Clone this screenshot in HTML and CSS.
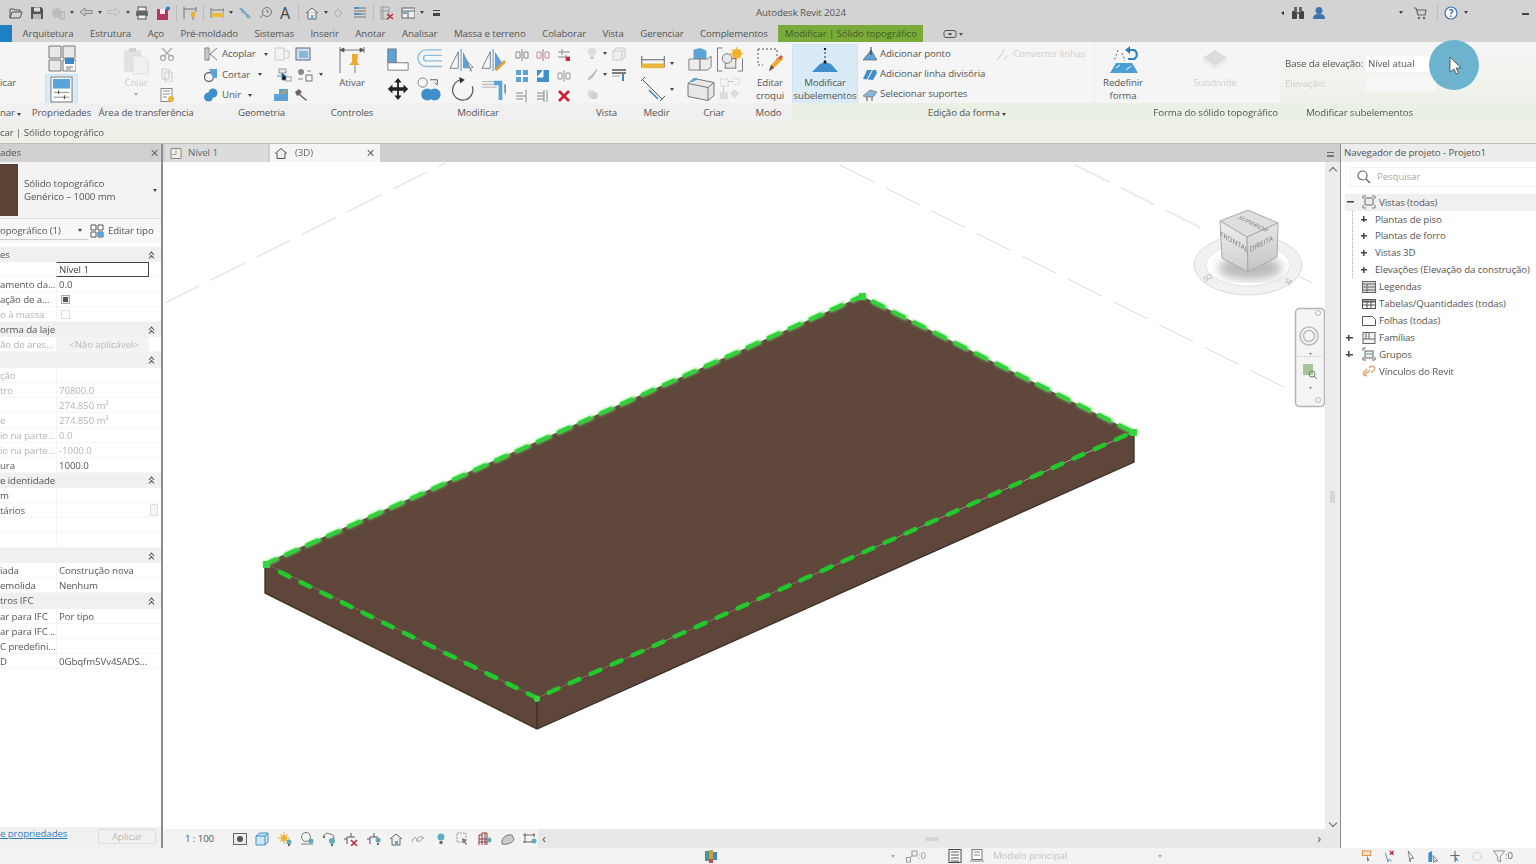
FILE: index.html
```html
<!DOCTYPE html>
<html lang="pt">
<head>
<meta charset="utf-8">
<title>Autodesk Revit 2024</title>
<link rel="stylesheet" href="styles.css">
</head>
<body>
<svg class="defs" aria-hidden="true"><symbol id="chev" viewBox="0 0 7 8"><path d="M1 4l2.500-3L6 4M1 7.500l2.500-3L6 7.500" fill="none" stroke="#555" stroke-width="1.100"/></symbol></svg>
<div class="app">

<header class="titlebar">
  <div class="qat">
    <svg class="ic14" viewBox="0 0 14 14"><path d="M1 12V3h4l1 1h5v2M1 12l2-6h10l-2 6z" fill="none" stroke="#555"/></svg>
    <svg class="ic14" viewBox="0 0 14 14"><path d="M1 1h10l2 2v10H1z" fill="#555"/><rect x="4" y="1.500" width="6" height="4" fill="#ddd"/><rect x="3" y="8" width="8" height="5" fill="#bbb"/></svg>
    <svg class="ic14" viewBox="0 0 14 14"><circle cx="6" cy="7" r="5" fill="#bdbdbd"/><path d="M9 6h5v7H9z" fill="#ccc" stroke="#aaa"/></svg>
    <i class="dd"></i>
    <svg class="ic14" viewBox="0 0 14 14"><path d="M1 6l5-4v2.500h7v3H6V10z" fill="#c9c9c9" stroke="#888"/></svg>
    <i class="dd"></i>
    <svg class="ic14" viewBox="0 0 14 14"><path d="M13 6L8 2v2.500H1v3h7V10z" fill="#d4d4d4" stroke="#bbb"/></svg>
    <i class="dd"></i>
    <svg class="ic14" viewBox="0 0 14 14"><rect x="3" y="1" width="8" height="4" fill="#eee" stroke="#555"/><rect x="1" y="5" width="12" height="5" rx="1" fill="#666"/><rect x="3" y="9" width="8" height="4" fill="#eee" stroke="#555"/></svg>
    <svg class="ic14" viewBox="0 0 14 14"><rect x="1" y="3" width="11" height="11" fill="#b5395a"/><rect x="4" y="3" width="5" height="5" fill="#eee"/><circle cx="12" cy="2.500" r="2" fill="#2c7fc0"/></svg>
    <span class="vsep"></span>
    <svg class="ic14" viewBox="0 0 14 14"><path d="M1 1v12M13 1v5M1 3h12" fill="none" stroke="#777"/><rect x="8" y="6" width="4" height="5" fill="#f0b030"/><path d="M10 11v3" stroke="#777"/></svg>
    <span class="vsep"></span>
    <svg class="ic14" viewBox="0 0 14 14"><path d="M1 2v10M14 2v10" stroke="#777"/><rect x="1" y="7" width="13" height="4" fill="#e8b93c"/><path d="M1 4h13" stroke="#777"/></svg>
    <i class="dd"></i>
    <svg class="ic14" viewBox="0 0 14 14"><path d="M2 2l10 10" stroke="#6aa9d4" stroke-width="2"/><path d="M3 7l3-3M8 12l3-3" stroke="#888"/></svg>
    <svg class="ic14" viewBox="0 0 14 14"><circle cx="8" cy="6" r="4.500" fill="none" stroke="#777"/><path d="M8 3.500V6h2M1 12l3-3" stroke="#777" fill="none"/></svg>
    <span class="qat-a">A</span>
    <span class="vsep"></span>
    <svg class="ic14" viewBox="0 0 14 14"><path d="M1 7l6-5 6 5M3 6v7h8V6" fill="#eee" stroke="#666"/><rect x="6" y="9" width="2.500" height="4" fill="#6aa9d4"/></svg>
    <i class="dd"></i>
    <svg class="ic10" viewBox="0 0 10 10"><path d="M5 1l4 4-4 4-4-4z" fill="none" stroke="#aaa"/></svg>
    <svg class="ic14 qat-lines" viewBox="0 0 14 14"><path d="M1 2h12M1 5h12M1 8h12M1 11h12" stroke="#777"/><path d="M1 2h5M1 8h7" stroke="#3f87c2" stroke-width="1.500"/></svg>
    <span class="vsep"></span>
    <svg class="ic14" viewBox="0 0 14 14"><path d="M1 1h8v12H1zM3 1v12M1 5h8" fill="none" stroke="#999"/><path d="M7 8l6 5M13 8l-6 5" stroke="#c0283c" stroke-width="1.500"/></svg>
    <svg class="ic14" viewBox="0 0 14 14"><rect x="1" y="2" width="13" height="10" fill="#eee" stroke="#666"/><path d="M1 5h13M7 5v7" stroke="#666"/><rect x="2" y="6" width="4" height="2" fill="#6aa9d4"/></svg>
    <i class="dd"></i>
    <span class="qat-menu"></span>
  </div>
  <div class="app-title">Autodesk Revit 2024</div>
  <div class="tray">
    <i class="dd dd-left"></i>
    <svg class="ic14" viewBox="0 0 14 14"><rect x="1" y="5" width="5" height="8" rx="1" fill="#444"/><rect x="8" y="5" width="5" height="8" rx="1" fill="#444"/><rect x="3" y="1" width="3" height="5" fill="#666"/><rect x="8" y="1" width="3" height="5" fill="#666"/><rect x="5" y="6" width="4" height="2" fill="#666"/></svg>
    <svg class="ic14" viewBox="0 0 14 14"><circle cx="7" cy="4.500" r="3.500" fill="#3e74ae"/><path d="M1 13c0-4 2-5 6-5s6 1 6 5z" fill="#3e74ae"/></svg>
    <i class="dd ml-cart-dd"></i>
    <svg class="ic14 ml-cart" viewBox="0 0 14 14"><path d="M1 2h2l2 7h7l1-5H4" fill="none" stroke="#666" stroke-width="1.200"/><circle cx="6" cy="12" r="1.200" fill="#666"/><circle cx="11" cy="12" r="1.200" fill="#666"/></svg>
    <span class="vsep ml-sep"></span>
    <svg class="ic14 ml-help" viewBox="0 0 14 14"><circle cx="7" cy="7" r="6" fill="#fff" stroke="#3e74ae" stroke-width="1.200"/><text x="7" y="10.500" text-anchor="middle" class="help-q">?</text></svg>
    <i class="dd"></i>
    <span class="minimize"></span>
  </div>
</header>

<nav class="tabs">
  <span class="tab-file"></span>
  <span>Arquitetura</span><span>Estrutura</span><span>Aço</span><span>Pré-moldado</span><span>Sistemas</span><span>Inserir</span><span>Anotar</span><span>Analisar</span><span>Massa e terreno</span><span>Colaborar</span><span>Vista</span><span>Gerenciar</span><span>Complementos</span>
  <span class="tab-context">Modificar | Sólido topográfico</span>
  <svg class="tab-extra" viewBox="0 0 20 10"><rect x="1" y="1.500" width="12" height="7" rx="2" fill="none" stroke="#555"/><rect x="5.500" y="4" width="3" height="2" fill="#555"/><path d="M16 4h4l-2 3z" fill="#555"/></svg>
</nav>

<section class="ribbon">
  <div class="panel p-select">
    <div class="pbody stack-start"><span class="big-label">icar</span></div>
    <div class="plabel left">nar <i class="dd"></i></div>
  </div>

  <div class="panel p-props">
    <div class="pbody center-col">
      <svg class="ic-prop-top" viewBox="0 0 28 27"><path d="M1 1h12v12H1zM15 1h12v12H15zM1 15h12v11H1z" fill="#e8e8e8" stroke="#777"/><rect x="15" y="15" width="13" height="11" fill="#fff" stroke="#777"/><rect x="17" y="13" width="9" height="6" fill="#3f87c2"/><path d="M18 22h7M18 24h5" stroke="#777"/></svg>
      <span class="selected-btn"><svg class="ic-prop" viewBox="0 0 24 28"><rect x="1" y="1" width="22" height="26" fill="#fff" stroke="#777"/><rect x="3" y="3" width="18" height="10" fill="#5ba3d8"/><path d="M4 17h16M4 22h16" stroke="#888"/><path d="M9 15v4M15 20v4" stroke="#333"/></svg></span>
    </div>
    <div class="plabel">Propriedades</div>
  </div>

  <div class="panel p-clip">
    <div class="pbody clip-grid">
      <div class="paste">
        <svg class="ic-paste" viewBox="0 0 26 28"><rect x="1" y="3" width="17" height="22" rx="1" fill="#e2e2e2"/><rect x="6" y="1" width="7" height="4" fill="#d2d2d2"/><path d="M10 9h10l5 5v13H10z" fill="#f0f0f0" stroke="#ddd"/></svg>
        <span class="faint">Colar</span>
        <i class="dd faint-dd"></i>
      </div>
      <div class="small-col">
        <svg class="ic16" viewBox="0 0 16 14"><circle cx="4" cy="11" r="2.500" fill="none" stroke="#aaa" stroke-width="1.300"/><circle cx="12" cy="11" r="2.500" fill="none" stroke="#aaa" stroke-width="1.300"/><path d="M5 9l8-8M11 9L3 1" stroke="#aaa" stroke-width="1.300"/></svg>
        <svg class="ic16" viewBox="0 0 16 14"><path d="M3 1h7v10H3zM6 4h7v10H6z" fill="#f2f2f2" stroke="#ccc"/></svg>
        <svg class="ic16" viewBox="0 0 16 14"><rect x="2" y="0.500" width="11" height="13" fill="#fff" stroke="#888"/><path d="M4 3h7M4 6h7M4 9h4" stroke="#888"/><circle cx="12" cy="11" r="3" fill="#e8b93c"/></svg>
      </div>
    </div>
    <div class="plabel">Área de transferência</div>
  </div>

  <div class="panel p-geo">
    <div class="pbody geo-grid">
      <div class="geo-row">
        <svg class="ic14" viewBox="0 0 14 14"><path d="M1 1h4v12H1zM13 1L6 7l7 6" fill="none" stroke="#777"/><path d="M3 1v12" stroke="#999"/></svg>
        <span class="cmd w35">Acoplar</span><i class="dd"></i>
        <svg class="ic16 sec1" viewBox="0 0 16 14"><path d="M1 1h9v12H1zM10 4h5v7h-5" fill="#f3f3f3" stroke="#ccc"/></svg>
        <svg class="ic16 sec2" viewBox="0 0 16 14"><rect x="1" y="1" width="14" height="12" fill="#cfe0ee" stroke="#668"/><rect x="4" y="4" width="9" height="7" fill="#8ab6d8"/></svg>
      </div>
      <div class="geo-row">
        <svg class="ic14" viewBox="0 0 14 14"><circle cx="5" cy="9" r="4.500" fill="none" stroke="#666" stroke-width="1.300"/><path d="M5 1h8v9H9" fill="#5ba3d8"/></svg>
        <span class="cmd w29">Cortar</span><i class="dd"></i>
        <svg class="ic16 sec3" viewBox="0 0 16 14"><rect x="3" y="1" width="7" height="4" fill="#e8e8e8" stroke="#999"/><path d="M6 5v7h8M1 8h10" stroke="#4a8fc5"/><rect x="10" y="9" width="5" height="4" fill="#fff" stroke="#999"/></svg>
        <svg class="ic16 sec4" viewBox="0 0 16 14"><circle cx="4" cy="4" r="3" fill="#888"/><rect x="9" y="7" width="6" height="6" fill="none" stroke="#777"/><path d="M1 11h5M10 3h4" stroke="#888"/></svg>
        <i class="dd"></i>
      </div>
      <div class="geo-row">
        <svg class="ic14" viewBox="0 0 14 14"><circle cx="4.500" cy="9" r="4.500" fill="#3f8fcb"/><circle cx="9" cy="5" r="4.500" fill="#3f8fcb"/></svg>
        <span class="cmd w19">Unir</span><i class="dd"></i>
        <svg class="ic16 sec5" viewBox="0 0 16 14"><path d="M1 13V6h5V1h9v12z" fill="#5ba3d8"/><path d="M8 6l5-4" stroke="#d93" stroke-width="2"/></svg>
        <svg class="ic14 sec6" viewBox="0 0 14 14"><path d="M1 4l4-3 3 3-2 2 7 6-1 1-7-6-2 1z" fill="#666"/></svg>
      </div>
    </div>
    <div class="plabel">Geometria</div>
  </div>

  <div class="panel p-ctl">
    <div class="pbody center-col">
      <svg class="ic-pin" viewBox="0 0 28 28"><path d="M2 1v26M26 1v6M2 4h24M2 4l4-2v4zM26 4l-4-2v4z" fill="#555" stroke="#555" stroke-width=".8"/><path d="M14 8h6l-1 8 3 3H11l3-3z" fill="#f0a92e"/><path d="M17 19v8" stroke="#888"/></svg>
      <span class="big-label">Ativar</span>
    </div>
    <div class="plabel">Controles</div>
  </div>

  <div class="panel p-mod">
    <div class="pbody mod-grid">
      <div class="mod-big">
        <svg class="ic26" viewBox="0 0 26 26"><rect x="2" y="1" width="9" height="15" fill="#5ba3d8" stroke="#777"/><path d="M2 16h22v8H2z" fill="#fff" stroke="#777"/></svg>
        <svg class="ic26" viewBox="0 0 28 26"><path d="M27 2H10a8 8 0 0 0 0 18h17M27 8H10a3 3 0 0 0 0 6h17" fill="none" stroke="#8fbcdc" stroke-width="1.500"/></svg>
        <svg class="ic26" viewBox="0 0 28 26"><path d="M1 22L10 4v18z" fill="none" stroke="#777"/><path d="M13 1v24" stroke="#4a8fc5"/><path d="M15 4l9 18h-9z" fill="#5ba3d8"/><path d="M19 14l7 7-3 1 1 3z" fill="#fff" stroke="#777"/></svg>
        <svg class="ic26" viewBox="0 0 28 26"><path d="M1 22L10 4v18z" fill="none" stroke="#777"/><path d="M13 1v24" stroke="#4a8fc5"/><path d="M15 4l9 14-9 6z" fill="#5ba3d8"/><path d="M16 24l10-10" stroke="#e8a030" stroke-width="3"/></svg>
        <svg class="ic26" viewBox="0 0 26 26"><path d="M13 1l4 5h-3v5h5V8l5 5-5 5v-3h-5v5h3l-4 5-4-5h3v-5H7v3l-5-5 5-5v3h5V6H9z" fill="#222"/></svg>
        <svg class="ic26" viewBox="0 0 28 26"><circle cx="6" cy="6" r="5" fill="none" stroke="#777"/><path d="M14 3h8v5M19 6l3 3" fill="none" stroke="#555"/><circle cx="11" cy="19" r="6.500" fill="#3f8fcb"/><circle cx="19" cy="19" r="6.500" fill="#3f8fcb"/></svg>
        <svg class="ic26" viewBox="0 0 28 26"><path d="M15 3a11 11 0 1 0 10 7" fill="none" stroke="#555" stroke-width="1.300"/><path d="M11 0l6 3-5 4z" fill="#333"/></svg>
        <svg class="ic26" viewBox="0 0 28 26"><path d="M1 5h16M1 8h16M1 11h16" stroke="#aaa"/><path d="M14 4h9v21h-4V9h-5z" fill="#5ba3d8"/><path d="M26 8v10" stroke="#333"/></svg>
      </div>
      <div class="mod-small">
        <svg class="ic14" viewBox="0 0 14 14"><path d="M1 4h4v6H1zM9 4h4v6H9zM7 1v12" fill="none" stroke="#888"/></svg>
        <svg class="ic14" viewBox="0 0 14 14"><path d="M1 4h4v6H1zM9 4h4v6H9z" fill="none" stroke="#c88"/><path d="M7 1v12" stroke="#888"/></svg>
        <svg class="ic14" viewBox="0 0 14 14"><path d="M1 4h12M1 9h12M5 1v6M9 7v6" stroke="#888"/><rect x="9" y="9" width="4" height="4" fill="#c0283c"/></svg>
        <svg class="ic14" viewBox="0 0 14 14"><path d="M1 1h5v5H1zM8 1h5v5H8zM1 8h5v5H1zM8 8h5v5H8z" fill="#5ba3d8"/></svg>
        <svg class="ic14" viewBox="0 0 14 14"><path d="M1 1h12v12H1z" fill="#3f8fcb"/><path d="M7 1v7H1" fill="#fff" stroke="#fff"/></svg>
        <svg class="ic14" viewBox="0 0 14 14"><path d="M1 4h4v6H1zM9 4h4v6H9zM7 1v12" fill="none" stroke="#999"/></svg>
        <svg class="ic14" viewBox="0 0 14 14"><path d="M1 4h7M1 7h7M1 10h7M11 1v12M8 7h3" stroke="#888"/></svg>
        <svg class="ic14" viewBox="0 0 14 14"><path d="M1 4h7M1 7h7M1 10h7M11 1v12M8 1v12" stroke="#888"/></svg>
        <svg class="ic14" viewBox="0 0 14 14"><path d="M2 2l10 10M12 2L2 12" stroke="#d02030" stroke-width="2.600"/></svg>
      </div>
    </div>
    <div class="plabel">Modificar</div>
  </div>

  <div class="panel p-vista">
    <div class="pbody vista-grid">
      <svg class="ic12" viewBox="0 0 12 14"><circle cx="6" cy="5" r="4.500" fill="#ddd"/><rect x="4" y="10" width="4" height="3" fill="#ccc"/></svg><i class="dd"></i>
      <svg class="ic14" viewBox="0 0 14 14"><path d="M1 4h9v9H1zM1 4l3-3h9v9l-3 3M10 4l3-3" fill="#eee" stroke="#ccc"/></svg>
      <svg class="ic12" viewBox="0 0 12 14"><path d="M1 13l3-5 3 2-4 3zM5 8l6-7 1 1-5 8" fill="#bbb"/></svg><i class="dd"></i>
      <svg class="ic14" viewBox="0 0 14 14"><path d="M0 2h14M0 5h14" stroke="#555" stroke-width="1.400"/><path d="M0 8h8" stroke="#aaa"/><path d="M11 6v7" stroke="#3f87c2" stroke-width="2"/></svg>
      <svg class="ic12" viewBox="0 0 12 14"><circle cx="5" cy="6" r="4" fill="#ddd"/><circle cx="8" cy="8" r="4" fill="#cfcfcf"/></svg>
    </div>
    <div class="plabel">Vista</div>
  </div>

  <div class="panel p-medir">
    <div class="pbody medir-grid">
      <svg class="ic-dim" viewBox="0 0 26 16"><path d="M1 0v12M25 0v12M1 4h24" stroke="#555"/><rect x="1" y="8" width="24" height="5" fill="#e8b93c"/></svg><i class="dd"></i>
      <svg class="ic-mea" viewBox="0 0 26 26"><path d="M2 3l20 20" stroke="#555"/><path d="M5 1L1 5M25 20l-5 5" stroke="#555"/><path d="M9 14l9 9" stroke="#3f87c2" stroke-width="1.500"/></svg><i class="dd"></i>
    </div>
    <div class="plabel">Medir</div>
  </div>

  <div class="panel p-criar">
    <div class="pbody criar-grid">
      <svg class="ic26" viewBox="0 0 26 26"><path d="M6 3l7-2 7 3v10H6z" fill="#5ba3d8"/><path d="M1 13h12v12H1z" fill="#ededed" stroke="#777"/><path d="M13 13h8l4-3v12l-4 3h-8z" fill="#ededed" stroke="#777"/></svg>
      <svg class="ic28" viewBox="0 0 28 26"><path d="M6 1H1v24h5M22 25h5V12" fill="none" stroke="#777"/><circle cx="21" cy="7" r="5" fill="#f0b030"/><path d="M21 0v14M14 7h14M16 2l10 10M26 2L16 12" stroke="#f0b030"/><rect x="9" y="12" width="11" height="10" fill="#e8e8e8" stroke="#777"/><circle cx="11" cy="12" r="5" fill="#e8e8e8" stroke="#777"/></svg>
      <svg class="ic28" viewBox="0 0 28 24"><path d="M1 6l6-5 20 4v13l-6 5-20-4z" fill="#e8e8e8" stroke="#777"/><path d="M1 6l20 4v13M21 10l6-5" fill="none" stroke="#777"/><path d="M4 4l6-3" stroke="#5ba3d8" stroke-width="2"/></svg>
      <svg class="ic26" viewBox="0 0 26 26"><path d="M4 2h8v8H4zM18 2h6v6h-6" fill="none" stroke="#ccc" stroke-dasharray="2 1"/><path d="M12 5h6M7 10v6" stroke="#bbb"/><rect x="3" y="16" width="9" height="8" fill="#ddd"/><path d="M19 13l5 5-5 5-5-5z" fill="#ddd"/></svg>
    </div>
    <div class="plabel">Criar</div>
  </div>

  <div class="panel p-modo">
    <div class="pbody center-col">
      <svg class="ic-edit" viewBox="0 0 26 26"><path d="M1 2h19v11M1 2v16h5" fill="none" stroke="#555" stroke-dasharray="2 2"/><path d="M12 24l2-6 9-9 3 3-9 9z" fill="#f0a92e"/><path d="M21 11l3-3 2 2-3 3z" fill="#d65a3a"/><path d="M12 24l2-6 3 3z" fill="#555"/></svg>
      <span class="big-label two">Editar<br>croqui</span>
    </div>
    <div class="plabel">Modo</div>
  </div>

  <div class="panel p-sub">
    <div class="pbody shape-row">
      <div class="sub-btn">
        <svg class="ic-sub" viewBox="0 0 26 25"><path d="M13 0v14" stroke="#222" stroke-dasharray="2 2"/><path d="M0 24l8-8 5-2 6 2 7 8z" fill="#3f8fcb"/><circle cx="13" cy="14" r="1.500" fill="#111"/><circle cx="13" cy="1" r="1.200" fill="#111"/></svg>
        <span class="big-label two">Modificar<br>subelementos</span>
      </div>
      <div class="shape-list">
        <div class="cmd-row"><svg class="ic14" viewBox="0 0 14 14"><path d="M0 13l4-5 4-5 6 10z" fill="#5ba3d8" stroke="#666" stroke-width=".7"/><path d="M8 0v8" stroke="#333"/></svg><span class="cmd">Adicionar ponto</span></div>
        <div class="cmd-row"><svg class="ic14" viewBox="0 0 14 14"><path d="M0 12l4-9h9l1 3-4 7z" fill="#3f8fcb"/><path d="M4 13l6-11" stroke="#fff"/></svg><span class="cmd">Adicionar linha divisória</span></div>
        <div class="cmd-row"><svg class="ic14" viewBox="0 0 14 14"><path d="M0 9l7-6 7 2-4 5H3z" fill="#8ab6d8" stroke="#666" stroke-width=".6"/><path d="M4 10v4M9 10v4" stroke="#555"/></svg><span class="cmd">Selecionar suportes</span></div>
      </div>
      <div class="convert">
        <svg class="ic14" viewBox="0 0 14 14"><path d="M1 13l5-6M6 7l2-5M8 13l4-5" stroke="#ddd" stroke-width="1.500"/></svg>
        <span class="faint">Converter linhas</span>
      </div>
    </div>
    <div class="plabel green-label">Edição da forma <i class="dd"></i></div>
  </div>

  <div class="panel p-form">
    <div class="pbody form-row">
      <div class="redef">
        <svg class="ic-red" viewBox="0 0 28 28"><path d="M0 27l6-10h16l6 10z" fill="#4a9fd6"/><path d="M6 22l4-3M16 24l5-4" stroke="#fff"/><path d="M8 4l-4 11M12 7l3 8" stroke="#666" stroke-dasharray="2 2"/><path d="M16 4h8a5 5 0 0 1 0 9h-6" fill="none" stroke="#2c7fc0" stroke-width="2"/><path d="M20 0l-5 4 5 4z" fill="#2c7fc0"/></svg>
        <span class="big-label two">Redefinir<br>forma</span>
      </div>
      <div class="subd">
        <svg class="ic-sd" viewBox="0 0 26 22"><path d="M1 9l12-8 12 8-12 8z" fill="#dcdcdc"/><path d="M1 9v4l12 8 12-8V9l-12 8z" fill="#ececec"/></svg>
        <span class="faint">Subdivide</span>
      </div>
    </div>
    <div class="plabel green-label">Forma do sólido topográfico</div>
  </div>

  <div class="panel p-base">
    <div class="pbody base-grid">
      <span class="cmd">Base da elevação:</span><span class="field">Nível atual<i class="dd faint-dd"></i></span>
      <span class="faint">Elevação:</span><span class="field blank"></span>
    </div>
    <div class="plabel green-label">Modificar subelementos</div>
  </div>
</section>

<div class="optionsbar">car | Sólido topográfico</div>

<main class="workspace">
  <aside class="props">
    <div class="pane-title">ades<span class="close">✕</span></div>
    <div class="type-box">
      <span class="swatch"></span>
      <div class="type-text">Sólido topográfico<br>Genérico – 1000 mm</div>
      <i class="dd"></i>
    </div>
    <div class="type-line">
      <span class="type-filter">opográfico (1)<i class="dd"></i></span>
      <svg class="ic14" viewBox="0 0 14 14"><path d="M1 1h5v5H1zM8 1h5v5H8zM1 8h5v5H1zM8 8h5v5H8z" fill="#fff" stroke="#555"/><rect x="8" y="8" width="5" height="5" fill="#5ba3d8"/></svg>
      <span>Editar tipo</span>
    </div>
    <div class="ptable">
      <div class="psec">es<svg class="chev"><use href="#chev"/></svg></div>
      <div class="prow"><span></span><span class="level-input">Nível 1</span></div>
      <div class="prow"><span>amento da...</span><span>0.0</span></div>
      <div class="prow"><span>ação de a...</span><span><i class="check on"></i></span></div>
      <div class="prow off"><span>o à massa</span><span><i class="check"></i></span></div>
      <div class="psec">orma da laje<svg class="chev"><use href="#chev"/></svg></div>
      <div class="prow off"><span>ão de ares...</span><span class="na">&lt;Não aplicável&gt;</span></div>
      <div class="psec"><span></span><svg class="chev"><use href="#chev"/></svg></div>
      <div class="prow off"><span>ção</span><span></span></div>
      <div class="prow off"><span>tro</span><span>70800.0</span></div>
      <div class="prow off"><span></span><span>274.850 m²</span></div>
      <div class="prow off"><span>e</span><span>274.850 m²</span></div>
      <div class="prow off"><span>io na parte...</span><span>0.0</span></div>
      <div class="prow off"><span>io na parte...</span><span>-1000.0</span></div>
      <div class="prow"><span>ura</span><span>1000.0</span></div>
      <div class="psec">e identidade<svg class="chev"><use href="#chev"/></svg></div>
      <div class="prow"><span>m</span><span></span></div>
      <div class="prow"><span>tários</span><span class="edit-cell"><i class="mini-btn"></i></span></div>
      <div class="prow"><span></span><span></span></div>
      <div class="prow"><span></span><span></span></div>
      <div class="psec"><span></span><svg class="chev"><use href="#chev"/></svg></div>
      <div class="prow"><span>iada</span><span>Construção nova</span></div>
      <div class="prow"><span>emolida</span><span>Nenhum</span></div>
      <div class="psec">tros IFC<svg class="chev"><use href="#chev"/></svg></div>
      <div class="prow"><span>ar para IFC</span><span>Por tipo</span></div>
      <div class="prow"><span>ar para IFC ...</span><span></span></div>
      <div class="prow"><span>C predefini...</span><span></span></div>
      <div class="prow"><span>D</span><span>0Gbqfm5Vv4SADS...</span></div>
    </div>
    <div class="props-foot"><a class="help-link">e propriedades</a><span class="apply">Aplicar</span></div>
  </aside>

  <div class="center">
    <div class="doc-tabs">
      <span class="doc-tab"><svg class="ic12" viewBox="0 0 12 12"><path d="M1 1h10v10H1z" fill="#eee" stroke="#888"/><path d="M1 7h5V1" fill="none" stroke="#c96"/></svg>Nível 1</span>
      <span class="doc-tab active"><svg class="ic12" viewBox="0 0 12 12"><path d="M0 6l6-5 6 5M2 5v6h8V5" fill="#eee" stroke="#555"/></svg>(3D)<span class="close">✕</span></span>
      <span class="tabs-menu"></span>
    </div>
    <div class="view-row">
      <div class="viewport">
        <svg class="canvas" viewBox="163 162 1162 667" role="img" aria-label="Vista 3D de um sólido topográfico">
          <defs>
            <linearGradient id="cl" x1="0" y1="0" x2="0" y2="1"><stop offset="0" stop-color="#eeeeee"/><stop offset="1" stop-color="#cfcfcf"/></linearGradient>
            <linearGradient id="cr" x1="0" y1="0" x2="0" y2="1"><stop offset="0" stop-color="#e6e6e6"/><stop offset="1" stop-color="#c4c4c4"/></linearGradient>
            <filter id="sh"><feGaussianBlur stdDeviation="5"/></filter>
            <filter id="gl"><feGaussianBlur stdDeviation="1.200"/></filter>
          </defs>
          <g class="ref-lines">
            <path d="M165 303L445 163"/>
            <path d="M840 165L1290 390"/>
            <path d="M1075 165L1205 230M1290 272L1312 283"/>
          </g>
          <polygon class="side" points="265,563 537,698 537,729 265,593"/>
          <polygon class="side" points="537,698 1134,432 1134,462 537,729"/>
          <polygon class="top" points="862,296 1133,432 537,698 265,563"/>
          <path class="edge" d="M265 563V593L537 729L1134 462V432M537 698V729"/>
          <path class="glow" filter="url(#gl)" d="M265 564L862 296L1133 432"/>
          <path class="dash-far" d="M265 564L862 296L1133 432"/>
          <path class="dash-near" d="M280 572L537 698L1133 432"/>
          <g class="grips">
            <rect x="263" y="561" width="7" height="7"/>
            <rect x="859" y="293" width="7" height="7"/>
            <rect x="1130" y="429" width="7" height="7"/>
            <circle cx="537" cy="699" r="3"/>
          </g>
          <ellipse class="ring" cx="1248" cy="265" rx="54" ry="30"/>
          <ellipse class="ring-in" cx="1248" cy="265" rx="42" ry="21"/>
          <ellipse cx="1250" cy="268" rx="32" ry="12" fill="#bcbcbc" filter="url(#sh)"/>
          <polygon class="cube-t" points="1220,221 1248,210 1278,223 1247,237"/>
          <polygon points="1220,221 1247,237 1248,272 1222,258" fill="url(#cl)" stroke="#aaa"/>
          <polygon points="1247,237 1278,223 1277,257 1248,272" fill="url(#cr)" stroke="#aaa"/>
          <text class="cube-txt" transform="matrix(.92 .55 -.05 1 1220 236)">FRONTAL</text>
          <text class="cube-txt" transform="matrix(.9 -.45 .05 1 1250 252)">DIREITA</text>
          <text class="cube-txt" transform="matrix(.85 .42 -.85 .42 1237 218)">SUPERIOR</text>
          <text class="ring-txt" transform="rotate(-28 1205 282)" x="1205" y="282">SO</text>
          <text class="ring-txt" transform="rotate(28 1284 282)" x="1284" y="282">SE</text>

          <rect class="wheel" x="1295.500" y="308.500" width="29" height="98" rx="4"/>
          <circle class="wheel-dot" cx="1318" cy="313" r="2.500"/>
          <circle class="wheel-dot" cx="1318" cy="400" r="2.500"/>
          <circle cx="1309" cy="336" r="9" fill="none" stroke="#bbb" stroke-width="1.500"/>
          <circle cx="1309" cy="336" r="5.500" fill="none" stroke="#bbb" stroke-width="1.500"/>
          <path d="M1309 353h3l-1.500 2zM1309 387h3l-1.500 2z" fill="#777"/>
          <path d="M1297 356.500h25" stroke="#ddd"/>
          <rect x="1303" y="364" width="10" height="11" fill="#a5c69a"/>
          <circle cx="1312" cy="374" r="3" fill="none" stroke="#777"/>
          <path d="M1314 376l3 3" stroke="#777"/>
        </svg>
      </div>
      <div class="vscroll"><i class="chev-up"></i><span class="grip-v"></span><i class="chev-down"></i></div>
    </div>
    <div class="viewbar">
      <span class="scale">1 : 100</span>
      <div class="viewbar-icons">
        <svg class="ic14" viewBox="0 0 14 12"><rect x="0.500" y="0.500" width="13" height="11" fill="#eee" stroke="#666"/><circle cx="7" cy="6" r="3" fill="#555"/></svg>
        <svg class="ic14" viewBox="0 0 14 14"><path d="M1 4l4-3h8v9l-3 3H1zM1 4h9v9M10 4l3-3" fill="#cfe6f6" stroke="#3f8fcb"/></svg>
        <svg class="ic14" viewBox="0 0 14 14"><circle cx="6" cy="6" r="3" fill="#f0b030"/><path d="M6 0v12M0 6h12M2 2l8 8M10 2l-8 8" stroke="#f0b030"/><circle cx="11" cy="10" r="2.500" fill="#63a9b8"/><rect x="10" y="12" width="2" height="2" fill="#666"/></svg>
        <svg class="ic14" viewBox="0 0 14 14"><circle cx="6" cy="5" r="4.500" fill="none" stroke="#777"/><path d="M1 12h12" stroke="#777"/><circle cx="11" cy="9" r="2.500" fill="#63a9b8"/></svg>
        <svg class="ic14" viewBox="0 0 14 14"><path d="M1 4l4-3 6 2 1 4" fill="none" stroke="#777"/><circle cx="2" cy="5" r="1.300" fill="#777"/><circle cx="10" cy="9" r="3" fill="#63a9b8"/><rect x="9" y="12" width="2" height="2" fill="#666"/></svg>
        <svg class="ic14" viewBox="0 0 14 14"><path d="M0 7h3M3 12V5h8M7 1v4" stroke="#555" fill="none"/><path d="M7 8l6 6M13 8l-6 6" stroke="#c0283c" stroke-width="1.600"/></svg>
        <svg class="ic14" viewBox="0 0 14 14"><path d="M0 7h3M3 12V5h8M7 1v4" stroke="#555" fill="none"/><circle cx="11" cy="8" r="2.500" fill="#63a9b8"/><rect x="10" y="11" width="2" height="2" fill="#666"/></svg>
        <svg class="ic14" viewBox="0 0 14 14"><path d="M1 7l6-5 6 5M3 6v7h8V6" fill="#eee" stroke="#666"/><rect x="6" y="9" width="3" height="4" fill="#63a9b8"/></svg>
        <svg class="ic14" viewBox="0 0 14 14"><path d="M1 10c2-6 4-6 5-1 1-5 4-5 7-3M6 9c2 1 4 0 6-3" fill="none" stroke="#999"/></svg>
        <svg class="ic14" viewBox="0 0 14 14"><circle cx="7" cy="5" r="3.500" fill="#5bb0c4"/><rect x="5.500" y="9" width="3" height="3" fill="#666"/></svg>
        <svg class="ic14" viewBox="0 0 14 14"><path d="M1 1h9v9H1z" fill="none" stroke="#999" stroke-dasharray="2 1"/><path d="M6 6l5 2-2 1 2 3-1 1-2-3-1 2z" fill="#777"/></svg>
        <svg class="ic14" viewBox="0 0 14 14"><path d="M1 13V3h3V1h5v12M1 7h8M1 10h8M4 3v10M7 1v12" fill="none" stroke="#8a3b3b"/><circle cx="11" cy="8" r="2.500" fill="#63a9b8"/></svg>
        <svg class="ic14" viewBox="0 0 14 14"><path d="M1 9c0-4 6-7 10-6l2 4c-1 4-7 6-12 5z" fill="#ccc" stroke="#777"/></svg>
        <svg class="ic14" viewBox="0 0 14 14"><path d="M2 1v10M0 3h12M11 1v4M0 10h9" fill="none" stroke="#666"/><circle cx="11" cy="9" r="2.500" fill="#63a9b8"/></svg>
      </div>
      <span class="hs-track"><span class="hs-left">‹</span><span class="grip-h"></span><span class="hs-right">›</span></span>
    </div>
  </div>

  <aside class="browser">
    <div class="browser-title">Navegador de projeto - Projeto1</div>
    <div class="search"><svg class="ic14" viewBox="0 0 14 14"><circle cx="5.500" cy="5.500" r="4.500" fill="none" stroke="#666" stroke-width="1.200"/><path d="M9 9l4 4" stroke="#666" stroke-width="1.500"/></svg><span>Pesquisar</span></div>
    <div class="tree">
      <div class="tnode head"><i class="minus"></i><svg class="ic14" viewBox="0 0 14 14"><path d="M1 4V1h3M10 1h3v3M13 10v3h-3M4 13H1v-3" fill="none" stroke="#777"/><rect x="3" y="3" width="8" height="7" rx="1" fill="#eee" stroke="#666"/></svg><span>Vistas (todas)</span></div>
      <div class="tkids">
        <div class="tkid"><i class="plus"></i><span>Plantas de piso</span></div>
        <div class="tkid"><i class="plus"></i><span>Plantas de forro</span></div>
        <div class="tkid"><i class="plus"></i><span>Vistas 3D</span></div>
        <div class="tkid"><i class="plus"></i><span>Elevações (Elevação da construção)</span></div>
      </div>
      <div class="tnode"><i class="none"></i><svg class="ic14" viewBox="0 0 14 14"><rect x="0.500" y="1.500" width="13" height="11" fill="#ddd" stroke="#666"/><path d="M1 4h12M1 7h12M1 10h12M5 4v9" stroke="#666"/></svg><span>Legendas</span></div>
      <div class="tnode"><i class="none"></i><svg class="ic14" viewBox="0 0 14 14"><rect x="0.500" y="2.500" width="13" height="9" fill="#fff" stroke="#555"/><path d="M1 4.500h12" stroke="#555" stroke-width="2"/><path d="M1 8h12M5 4v8M9 4v8" stroke="#555"/></svg><span>Tabelas/Quantidades (todas)</span></div>
      <div class="tnode"><i class="none"></i><svg class="ic14" viewBox="0 0 14 14"><path d="M.5 2.500h10l3 3v6H.5z" fill="#fff" stroke="#555"/></svg><span>Folhas (todas)</span></div>
      <div class="tnode"><i class="plus"></i><svg class="ic14" viewBox="0 0 14 14"><rect x="1" y="1.500" width="12" height="11" fill="#f2f2f2" stroke="#666"/><path d="M1 8h12M7 2v6M4 2v6" stroke="#666"/></svg><span>Famílias</span></div>
      <div class="tnode"><i class="plus"></i><svg class="ic14" viewBox="0 0 14 14"><path d="M4 1H1v3M1 10v3h3M10 13h3v-3" fill="none" stroke="#666"/><rect x="3" y="4" width="8" height="7" fill="#eee" stroke="#666"/><path d="M3 7h8" stroke="#5a9"/></svg><span>Grupos</span></div>
      <div class="tnode"><i class="none"></i><svg class="ic14" viewBox="0 0 14 14"><path d="M2 11l3-3M5 11a2 2 0 0 1-3-3l3-3M9 3a2 2 0 0 1 3 3L9 9M8 6L5 9M7 4l2-2" fill="none" stroke="#e0a070" stroke-width="1.300"/></svg><span>Vínculos do Revit</span></div>
    </div>
  </aside>
</main>

<footer class="statusbar">
  <svg class="ic14 st-revit" viewBox="0 0 14 14"><rect x="1" y="2" width="4" height="10" fill="#4a9a8a"/><rect x="5" y="1" width="4" height="9" fill="#d0a040"/><rect x="9" y="3" width="4" height="8" fill="#3f87c2"/><path d="M5 10h4v4H5z" fill="#c05050"/></svg>
  <i class="dd faint-dd st-dd1"></i>
  <span class="st-work"><svg class="ic12" viewBox="0 0 12 12"><rect x="0.500" y="7" width="4" height="4.500" fill="none" stroke="#999"/><rect x="6" y="0.500" width="5" height="5" fill="none" stroke="#999"/><path d="M4 7l3-2" stroke="#999"/></svg>:0</span>
  <svg class="ic14 st-tb1" viewBox="0 0 14 14"><rect x="1" y="0.500" width="12" height="13" fill="#fff" stroke="#444"/><path d="M3 3h8M3 6h8M3 9h8M3 12h8" stroke="#555"/></svg>
  <svg class="ic14 st-tb2" viewBox="0 0 14 14"><rect x="2" y="0.500" width="10" height="10" fill="#fff" stroke="#777"/><path d="M4 3h6M4 6h6M0 12h14" stroke="#888"/></svg>
  <span class="st-model">Modelo principal</span>
  <i class="dd faint-dd st-dd2"></i>
  <div class="st-right">
    <svg class="ic12" viewBox="0 0 12 14"><rect x="1" y="1" width="9" height="5" fill="#f6e4d0" stroke="#d98a3a"/><path d="M6 6l3 6-2-1-1 2z" fill="#777"/></svg>
    <svg class="ic12" viewBox="0 0 12 14"><path d="M2 3l3 10 1-3 3 2" fill="none" stroke="#4a8fc5"/><path d="M7 1l4 4M11 1L7 5" stroke="#c0283c" stroke-width="1.500"/></svg>
    <svg class="ic12" viewBox="0 0 12 14"><path d="M3 1l6 8-3-.5L5 13z" fill="#fff" stroke="#777"/></svg>
    <svg class="ic12" viewBox="0 0 12 14"><path d="M1 13V3l4-2v12z" fill="#3f8fcb"/><path d="M6 6l5 6-3-.5-1 2z" fill="#fff" stroke="#777"/></svg>
    <svg class="ic12" viewBox="0 0 12 14"><path d="M6 1v12M1 6h10" stroke="#555"/><path d="M6 6l4 6-3-1-1 2z" fill="#3f8fcb"/></svg>
    <svg class="ic12" viewBox="0 0 12 14"><circle cx="6" cy="7" r="4.500" fill="none" stroke="#bbb" stroke-dasharray="2 1"/></svg>
    <span class="st-filter"><svg class="ic12" viewBox="0 0 12 14"><path d="M0 1h12L7.500 7v6l-3-2V7z" fill="#f4f4f4" stroke="#888"/></svg>:0</span>
  </div>
</footer>

<svg class="cursor-spot" viewBox="0 0 50 50" aria-hidden="true"><circle cx="25" cy="25" r="25" fill="#6db3cd"/><path d="M21 17v15l4-3 2.500 5 2-1-2.500-5h5z" fill="#fff" stroke="#444" stroke-width=".8"/></svg>
</div>
</body>
</html>
```
FILE: styles.css
```css
* { box-sizing: border-box; }
html, body { margin: 0; height: 100%; overflow: hidden; background: #f3f3f3; }
body { font: 9.700px/1.2 "Open Sans", "Noto Sans", sans-serif; letter-spacing: -.1px; color: #555; }
svg { display: block; flex: none; }
i { display: inline-block; font-style: normal; }
.defs { width: 0; height: 0; position: absolute; }

.app { position: relative; width: 1536px; height: 864px; overflow: hidden; display: flex; flex-direction: column; filter: blur(.35px); }

.ic10 { width: 10px; height: 10px; }
.ic12 { width: 12px; height: 13px; }
.ic14 { width: 14px; height: 14px; }
.ic16 { width: 16px; height: 14px; }
.ic26 { width: 26px; height: 24px; }
.ic28 { width: 28px; height: 25px; }

.dd { width: 0; height: 0; border-left: 2.500px solid transparent; border-right: 2.500px solid transparent; border-top: 3px solid #444; flex: none; }
.faint-dd { border-top-color: #aaa; }
.dd-left { border: 0; border-top: 2.500px solid transparent; border-bottom: 2.500px solid transparent; border-right: 3px solid #333; }

/* title bar */
.titlebar { height: 25px; background: #d3d3d3; display: flex; align-items: center; flex: none; }
.qat { display: flex; align-items: center; gap: 7px; padding-left: 9px; width: 756px; flex: none; }
.qat .dd { margin: 0 -2px; }
.qat-lines { margin-left: 3px; }
.vsep { width: 1px; height: 16px; background: #bdbdbd; margin: 0 -1px; }
.qat-a { font-size: 16px; line-height: 16px; color: #444; width: 12px; letter-spacing: 0; }
.qat-menu { width: 7px; height: 6px; border-top: 1px solid #444; border-bottom: 3px solid #444; margin-left: 4px; }
.help-q { font: bold 10px "Open Sans", sans-serif; fill: #3e74ae; }
.app-title { width: 521px; flex: none; color: #555; }
.tray { display: flex; align-items: center; gap: 7px; flex: 1; padding-left: 4px; }
.ml-cart-dd { margin-left: 66px; }
.ml-cart { margin-left: 3px; }
.ml-sep { margin-left: 3px; }
.ml-help { margin-right: -1px; }
.minimize { width: 7px; height: 2px; background: #444; margin-left: 47px; margin-top: 3px; }

/* ribbon tabs */
.tabs { height: 17px; background: #d3d3d3; display: flex; align-items: center; gap: 16.500px; flex: none; white-space: nowrap; }
.tab-file { width: 12px; height: 17px; background: #1f7fc4; margin-right: -6px; }
.tab-context { background: #7aab3a; color: #3f5d23; height: 17px; line-height: 17px; width: 145px; text-align: center; margin-left: -6px; }
.tab-extra { width: 20px; height: 10px; margin-left: 3px; }

/* ribbon */
.ribbon { height: 80px; flex: none; display: flex; background: #f5f5f5; }
.panel { display: flex; flex-direction: column; flex: none; }
.pbody { height: 61px; flex: none; }
.plabel { height: 19px; flex: none; text-align: center; line-height: 19px; background: #f0f0f0; white-space: nowrap; }
.plabel.left { text-align: left; }
.green-label { background: #ebf0e4; }
.center-col { display: flex; flex-direction: column; align-items: center; }
.big-label { line-height: 13px; text-align: center; white-space: nowrap; }
.faint { color: #cfcfcf; white-space: nowrap; }
.cmd { white-space: nowrap; }

.p-select { width: 28px; }
.stack-start { padding-top: 34px; }
.p-props { width: 67px; }
.p-props .pbody { padding-top: 3px; }
.ic-prop-top { width: 28px; height: 27px; }
.selected-btn { width: 33px; height: 31px; margin-top: 2px; background: #d9ebf7; border: 1px solid #cfe2f0; display: flex; justify-content: center; padding-top: 1px; }
.ic-prop { width: 23px; height: 27px; }

.p-clip { width: 102px; }
.clip-grid { display: flex; padding: 5px 0 0 27px; }
.paste { width: 28px; display: flex; flex-direction: column; align-items: center; }
.ic-paste { width: 26px; height: 28px; margin-bottom: 2px; }
.paste .dd { margin-top: 4px; }
.small-col { margin-left: 9px; display: flex; flex-direction: column; gap: 6.500px; }

.p-geo { width: 129px; }
.geo-grid { padding: 5px 0 0 7px; display: flex; flex-direction: column; gap: 6.500px; }
.geo-row { height: 14px; display: flex; align-items: center; }
.geo-row .cmd { margin-left: 4px; }
.geo-row .dd { margin-left: 6px; }
.w35 { width: 36px; }
.w29 { width: 30px; }
.w19 { width: 20px; }
.sec1 { margin-left: 6px; }
.sec2 { margin-left: 5px; }
.sec3 { margin-left: 14px; }
.sec4 { margin-left: 5px; }
.sec5 { margin-left: 21px; }
.sec6 { margin-left: 5px; }

.p-ctl { width: 52px; }
.p-ctl .pbody { padding-top: 4px; }
.ic-pin { width: 28px; height: 28px; margin-bottom: 2px; }

.p-mod { width: 200px; }
.mod-grid { display: flex; padding: 6px 0 0 7px; }
.mod-big { display: grid; grid-template-columns: repeat(4, 32px); grid-auto-rows: 29px; width: 133px; }
.mod-small { display: grid; grid-template-columns: repeat(3, 21px); grid-auto-rows: 20.500px; }

.p-vista { width: 57px; }
.vista-grid { display: grid; grid-template-columns: 12px 14px 16px; grid-auto-rows: 20.500px; padding: 5px 0 0 8px; align-items: start; }
.vista-grid .dd { margin: 5px 0 0 5px; }

.p-medir { width: 57px; }
.p-medir .plabel { padding-right: 14px; }
.medir-grid { display: grid; grid-template-columns: 26px 8px; grid-template-rows: 25px 26px; padding: 9px 0 0 5px; align-items: center; column-gap: 4px; }
.ic-dim { width: 26px; height: 15px; }
.ic-mea { width: 26px; height: 26px; }

.p-criar { width: 56px; }
.p-criar .plabel { padding-right: 12px; }
.criar-grid { display: grid; grid-template-columns: 29px 29px; grid-auto-rows: 30px; padding-top: 5px; margin-left: -5px; }

.p-modo { width: 44px; }
.p-modo .pbody { padding-top: 5px; }
.p-modo .plabel { padding-right: 3px; }
.ic-edit { width: 26px; height: 26px; margin-bottom: 3px; }
.big-label.two { display: block; }

.p-sub { width: 302px; }
.shape-row { display: flex; }
.sub-btn { width: 66px; height: 60px; margin-top: 2px; background: #d9ebf7; border: 1px solid #cde2f2; display: flex; flex-direction: column; align-items: center; padding-top: 3px; }
.ic-sub { width: 26px; height: 25px; margin-bottom: 3px; }
.shape-list { margin-left: 5px; display: flex; flex-direction: column; gap: 6px; padding-top: 5px; width: 133px; flex: none; }
.cmd-row { height: 14px; display: flex; align-items: center; gap: 3px; }
.convert { display: flex; gap: 3px; padding-top: 5px; align-items: center; height: 19px; }
.p-sub .plabel { padding-left: 48px; }

.p-form { width: 186px; }
.form-row { display: flex; border-left: 1px solid #ececec; }
.redef { width: 56px; padding-top: 4px; display: flex; flex-direction: column; align-items: center; }
.ic-red { width: 28px; height: 28px; margin-bottom: 2px; margin-left: 2px; }
.subd { margin-left: 40px; width: 48px; padding-top: 7px; display: flex; flex-direction: column; align-items: center; gap: 6px; }
.ic-sd { width: 26px; height: 22px; }
.p-form .plabel { text-align: right; padding-right: 2px; }

.p-base { flex: 1; background: #ebf0e4; }
.p-base .plabel { text-align: left; padding-left: 26px; }
.base-grid { display: grid; grid-template-columns: 81px 70px; grid-template-rows: 16px 16px; row-gap: 4px; padding: 14px 0 0 5px; align-items: center; background: linear-gradient(#f5f5f5, #eef1e8); }
.field { height: 16px; background: #fff; display: flex; align-items: center; justify-content: space-between; padding: 0 3px 0 2px; }
.field.blank { background: #f6f6f6; }

/* options bar */
.optionsbar { height: 22px; flex: none; background: #edf1e7; line-height: 22px; border-bottom: 1px solid #bcbcbc; }

/* workspace */
.workspace { flex: 1; display: flex; min-height: 0; }
.props { width: 163px; flex: none; background: #fff; border-right: 2px solid #8c8c8c; display: flex; flex-direction: column; }
.pane-title { height: 18px; background: #d0d0d0; line-height: 18px; display: flex; justify-content: space-between; padding-right: 2px; flex: none; }
.close { font-size: 11px; color: #666; }
.type-box { height: 57px; background: #f3f3f3; display: flex; align-items: center; flex: none; padding-right: 4px; border-bottom: 1px solid #ddd; }
.swatch { width: 18px; height: 52px; background: #5c4234; flex: none; }
.type-text { margin-left: 6px; line-height: 13px; flex: 1; white-space: nowrap; }
.type-line { height: 24px; display: flex; align-items: center; background: #f7f7f7; flex: none; white-space: nowrap; }
.type-filter { width: 88px; height: 18px; display: flex; align-items: center; justify-content: space-between; padding-right: 6px; border-bottom: 1px solid #ccc; margin-right: 2px; }
.type-line span:last-child { margin-left: 4px; }
.ptable { margin-top: 4px; flex: none; }
.psec, .prow { height: 15.070px; line-height: 15px; white-space: nowrap; }
.psec { background: #f0f0f0; display: flex; justify-content: space-between; align-items: center; padding-right: 6px; }
.prow { display: grid; grid-template-columns: 56px 1fr; border-bottom: 1px solid #f6f6f6; }
.prow > span { overflow: hidden; }
.prow > span:last-child { padding-left: 2px; border-left: 1px solid #f4f4f4; }
.prow.off { color: #b5b5b5; }
.chev { width: 7px; height: 8px; }
.level-input { border: 1px solid #444; margin-right: 12px; line-height: 13px; background: #fff; height: 15px; color: #444; }
.na { background: #f3f3f3; text-align: center; margin-right: 12px; color: #bbb; }
.check { width: 9px; height: 9px; border: 1px solid #ddd; margin: 3px 0 0 2px; }
.check.on { background: #555; border-color: #aaa; box-shadow: inset 0 0 0 1px #eee; }
.edit-cell { display: flex; justify-content: flex-end; padding-right: 3px; }
.mini-btn { width: 8px; height: 12px; border: 1px solid #ddd; background: #f4f4f4; margin-top: 1px; }
.props-foot { margin-top: auto; height: 21px; background: #f0f0f0; display: flex; justify-content: space-between; align-items: center; padding: 0 5px 2px 0; white-space: nowrap; }
.help-link { color: #2f7fbf; text-decoration: underline; margin-top: -5px; }
.apply { width: 58px; height: 15px; border: 1px solid #dcdcdc; border-radius: 2px; color: #bbb; text-align: center; line-height: 14px; }

.center { width: 1178px; flex: none; display: flex; flex-direction: column; border-right: 1px solid #8c8c8c; }
.doc-tabs { height: 18px; background: #cfcfcf; display: flex; flex: none; padding-left: 2px; }
.doc-tab { width: 103px; height: 18px; background: #dcdcdc; display: flex; align-items: center; gap: 6px; padding-left: 5px; margin-right: 2px; color: #666; }
.doc-tab.active { width: 110px; background: #f5f5f5; gap: 8px; }
.doc-tab.active .close { margin-left: auto; margin-right: 5px; }
.tabs-menu { margin-left: auto; margin-right: 6px; width: 7px; height: 5px; margin-top: 8px; border-top: 1px solid #666; border-bottom: 2px solid #777; }
.view-row { flex: 1; display: flex; min-height: 0; }
.viewport { width: 1162px; flex: none; background: #fff; }
.canvas { width: 1162px; height: 667px; }
.ref-lines path { fill: none; stroke: #d9d9d9; stroke-width: 1; stroke-dasharray: 38 13; }
.top { fill: #5f483b; }
.side { fill: #5e473a; }
.edge { fill: none; stroke: #3b2f27; stroke-width: 1.300; }
.glow { fill: none; stroke: #6fe66f; stroke-width: 5.500; stroke-dasharray: 13 10; opacity: .7; stroke-linecap: round; }
.dash-far { fill: none; stroke: #2fd23a; stroke-width: 4; stroke-dasharray: 11 12; stroke-linecap: round; }
.dash-near { fill: none; stroke: #21c92c; stroke-width: 4.500; stroke-dasharray: 10.500 12.500; stroke-linecap: round; }
.grips { fill: #35d63e; }
.ring { fill: #f1f1f1; stroke: #dcdcdc; }
.ring-in { fill: #fff; stroke: #e2e2e2; }
.cube-t { fill: #dedede; stroke: #aaa; }
.cube-txt { font: 7px "Open Sans", sans-serif; fill: #777; letter-spacing: 0; }
.ring-txt { font: 7px "Open Sans", sans-serif; fill: #aaa; }
.wheel { fill: #f4f4f4; stroke: #b5b5b5; stroke-width: 1.500; }
.wheel-dot { fill: none; stroke: #bbb; }
.vscroll { flex: 1; background: #ececec; display: flex; flex-direction: column; align-items: center; justify-content: space-between; padding: 6px 0 3px; }
.chev-up, .chev-down { width: 6px; height: 6px; border-left: 1px solid #666; border-top: 1px solid #666; transform: rotate(45deg); }
.chev-down { transform: rotate(225deg); }
.grip-v { width: 5px; height: 12px; background: #d6d6d6; }
.viewbar { height: 19px; flex: none; display: flex; align-items: center; background: #f3f3f3; }
.scale { margin-left: 22px; width: 48px; flex: none; color: #555; }
.viewbar-icons { display: flex; gap: 8.300px; width: 305px; flex: none; }
.hs-track { flex: 1; height: 19px; background: #e8e8e8; display: flex; align-items: center; justify-content: space-between; padding: 0 19px 0 4px; font-size: 13px; color: #555; }
.grip-h { width: 14px; height: 4px; background: #d6d6d6; }

/* project browser */
.browser { flex: 1; background: #fff; min-width: 0; white-space: nowrap; }
.browser-title { height: 18px; line-height: 18px; background: #ececec; padding-left: 3px; }
.search { height: 20px; margin: 5px 0 0 9px; border: 1px solid #f0f0f0; border-right: 0; display: flex; align-items: center; gap: 6px; padding-left: 6px; color: #aaa; }
.tree { padding: 7px 0 0 4px; }
.tnode, .tkid { height: 16.900px; display: flex; align-items: center; }
.tnode { gap: 3px; }
.tnode.head { background: #f0f0f0; }
.tnode i { width: 14px; flex: none; }
.tkids { margin-left: 7px; border-left: 1px dotted #aaa; }
.tkid { padding-left: 8px; gap: 8px; }
.plus { width: 6px; height: 6px; background: linear-gradient(#444, #444) center / 7px 1.500px no-repeat, linear-gradient(#444, #444) center / 1.500px 7px no-repeat; flex: none; }
.tnode .plus { width: 8px; margin-right: 6px; }
.minus { height: 2px; background: linear-gradient(#444, #444) 2px 0 / 7px 1.500px no-repeat; }

/* status bar */
.statusbar { height: 16px; flex: none; background: #f3f3f3; display: flex; align-items: center; }
.st-revit { margin-left: 704px; }
.st-dd1 { margin-left: 173px; }
.st-work { display: flex; align-items: center; margin-left: 11px; color: #999; width: 42px; flex: none; }
.st-tb2 { margin-left: 8px; }
.st-model { margin-left: 9px; color: #c2c2c2; width: 165px; flex: none; }
.st-right { margin-left: 199px; display: flex; align-items: center; gap: 10px; }
.st-filter { display: flex; align-items: center; color: #666; }

/* pointer highlight over the ribbon */
.cursor-spot { position: absolute; left: 1429px; top: 40px; width: 50px; height: 50px; }
```
